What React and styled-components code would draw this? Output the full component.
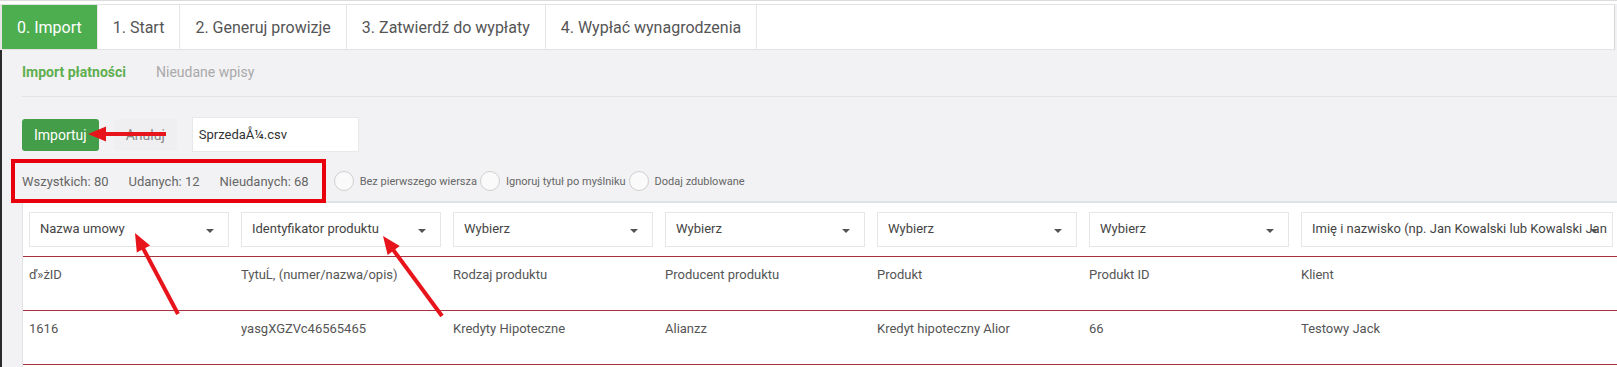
import React from "react";
import styled, { createGlobalStyle } from "styled-components";

const GlobalStyle = createGlobalStyle`
  html, body { margin: 0; padding: 0; background: #f2f2f4; }
  body { font-family: Roboto, "Noto Sans", "Liberation Sans", Arial, sans-serif; overflow: hidden; }
  * { box-sizing: border-box; }
`;

const Page = styled.div`
  position: relative;
  width: 1617px;
  height: 367px;
  overflow: hidden;
  background: #f2f2f4;
  border-top: 1px solid #dcdcdc;
  display: flex;
  flex-direction: column;
`;

const TopStrip = styled.div`
  height: 3px;
  background: #fff;
  flex: none;
`;

const TabBar = styled.nav`
  display: flex;
  flex: none;
  height: 46px;
  background: #fff;
  border-top: 1px solid #e3e3e3;
  border-bottom: 1px solid #e3e3e3;
  border-left: 2px solid #e6e6e6;
  border-right: 1px solid #d6d6d6;
  margin-right: 2px;
`;

const Tab = styled.div`
  display: flex;
  align-items: center;
  padding: 0 15px;
  font-size: 16px;
  color: ${(p) => (p.$active ? "#ffffff" : "#555555")};
  background: ${(p) => (p.$active ? "#4cae4f" : "#ffffff")};
  border-right: 1px solid #e6e6e6;
  white-space: nowrap;
`;

const Content = styled.div`
  flex: 1;
  display: flex;
  flex-direction: column;
  border-left: 2px solid #2b2b2b;
  padding-left: 20px;
  min-height: 0;
`;

const SubTabs = styled.div`
  display: flex;
  align-items: center;
  gap: 30px;
  height: 47px;
  padding-bottom: 3px;
  border-bottom: 1px solid #e2e2e2;
  flex: none;
`;

const SubTab = styled.div`
  font-size: 14px;
  font-weight: ${(p) => (p.$active ? 700 : 400)};
  color: ${(p) => (p.$active ? "#5fae4f" : "#a9a9a9")};
`;

const Toolbar = styled.div`
  display: flex;
  align-items: center;
  gap: 15px;
  height: 35px;
  margin-top: 20px;
  flex: none;
`;

const PrimaryButton = styled.button`
  height: 32px;
  padding: 0 12px;
  border: none;
  border-radius: 3px;
  background: #449d48;
  color: #fff;
  font-family: inherit;
  font-size: 14px;
`;

const GhostButton = styled.button`
  height: 32px;
  padding: 0 12px;
  border: none;
  border-radius: 3px;
  background: #efeff1;
  color: #888;
  font-family: inherit;
  font-size: 14px;
`;

const FileBox = styled.div`
  width: 167px;
  height: 35px;
  display: flex;
  align-items: center;
  padding-left: 6px;
  background: #fff;
  border: 1px solid #e8e8e8;
  font-size: 13px;
  color: #333;
`;

const StatsRow = styled.div`
  display: flex;
  align-items: center;
  height: 40px;
  margin-top: 9px;
  flex: none;
`;

const Stats = styled.div`
  display: flex;
  gap: 20px;
  margin-right: 25px;
`;

const Stat = styled.span`
  font-size: 13px;
  color: #666;
`;

const Option = styled.label`
  display: flex;
  align-items: center;
`;

const Circle = styled.span`
  width: 20px;
  height: 20px;
  border-radius: 50%;
  border: 1px solid #cfcfcf;
  background: #fafafa;
  flex: none;
`;

const OptionLabel = styled.span`
  font-size: 11px;
  color: #666;
  margin: 0 3px 0 6px;
  white-space: nowrap;
`;

const Panel = styled.div`
  flex: 1;
  background: #fff;
  border-top: 2px solid #dde2e8;
  border-left: 1px solid #e2e2e2;
`;

const GridRow = styled.div`
  display: grid;
  grid-template-columns: repeat(6, 212px) 1fr;
`;

const SelectRow = styled(GridRow)`
  padding: 9px 0;
`;

const DataRow = styled(GridRow)`
  height: 54px;
  border-top: 1px solid #a83240;
  &:last-child { border-bottom: 1px solid #a83240; height: 55px; }
`;

const Cell = styled.div`
  padding: 0 ${(p) => (p.$last ? "4px" : "6px")} 0 6px;
  min-width: 0;
`;

const TextCell = styled(Cell)`
  padding-top: 10px;
  font-size: 13px;
  line-height: 16px;
  color: #555;
  white-space: nowrap;
`;

const Select = styled.div`
  position: relative;
  height: 35px;
  display: flex;
  align-items: center;
  padding: 0 0 3px 10px;
  border: 1px solid #e6e6e6;
  background: #fff;
  font-size: 13px;
  color: #444;
  white-space: nowrap;
  overflow: hidden;
`;

const Caret = styled.span`
  position: absolute;
  right: 14px;
  top: 16px;
  width: 0;
  height: 0;
  border-left: 4px solid transparent;
  border-right: 4px solid transparent;
  border-top: 4px solid #555;
`;

const Highlight = styled.div`
  position: absolute;
  left: 11px;
  top: 158px;
  width: 315px;
  height: 44px;
  border: 4px solid #e8000d;
  pointer-events: none;
`;

const Overlay = styled.svg`
  position: absolute;
  left: 0;
  top: 0;
  pointer-events: none;
`;

function Arrow({ from, to }) {
  const [x1, y1] = from;
  const [x2, y2] = to;
  const dx = x2 - x1;
  const dy = y2 - y1;
  const len = Math.hypot(dx, dy);
  const ux = dx / len;
  const uy = dy / len;
  const head = 18;
  const half = 7.5;
  const bx = x2 - ux * head;
  const by = y2 - uy * head;
  const px = -uy;
  const py = ux;
  const pts = `${x2},${y2} ${bx + px * half},${by + py * half} ${bx - px * half},${by - py * half}`;
  return (
    <g>
      <line x1={x1} y1={y1} x2={bx + ux * 2} y2={by + uy * 2} stroke="#e8141b" strokeWidth="4" />
      <polygon points={pts} fill="#e8141b" />
    </g>
  );
}

const tabs = ["0. Import", "1. Start", "2. Generuj prowizje", "3. Zatwierdź do wypłaty", "4. Wypłać wynagrodzenia"];
const selects = [
  "Nazwa umowy",
  "Identyfikator produktu",
  "Wybierz",
  "Wybierz",
  "Wybierz",
  "Wybierz",
  "Imię i nazwisko (np. Jan Kowalski lub Kowalski Jan",
];
const headers = ["ď»żID", "TytuĹ‚ (numer/nazwa/opis)", "Rodzaj produktu", "Producent produktu", "Produkt", "Produkt ID", "Klient"];
const data = ["1616", "yasgXGZVc46565465", "Kredyty Hipoteczne", "Alianzz", "Kredyt hipoteczny Alior", "66", "Testowy Jack"];
const options = ["Bez pierwszego wiersza", "Ignoruj tytuł po myślniku", "Dodaj zdublowane"];

export default function App() {
  return (
    <>
      <GlobalStyle />
      <Page>
        <TopStrip />
        <TabBar>
          {tabs.map((t, i) => (
            <Tab key={t} $active={i === 0}>{t}</Tab>
          ))}
        </TabBar>
        <Content>
          <SubTabs>
            <SubTab $active>Import płatności</SubTab>
            <SubTab>Nieudane wpisy</SubTab>
          </SubTabs>
          <Toolbar>
            <PrimaryButton>Importuj</PrimaryButton>
            <GhostButton>Anuluj</GhostButton>
            <FileBox>SprzedaÅ¼.csv</FileBox>
          </Toolbar>
          <StatsRow>
            <Stats>
              <Stat>Wszystkich: 80</Stat>
              <Stat>Udanych: 12</Stat>
              <Stat>Nieudanych: 68</Stat>
            </Stats>
            {options.map((o) => (
              <Option key={o}>
                <Circle />
                <OptionLabel>{o}</OptionLabel>
              </Option>
            ))}
          </StatsRow>
          <Panel>
            <SelectRow>
              {selects.map((s, i) => (
                <Cell key={i} $last={i === selects.length - 1}>
                  <Select>
                    {s}
                    <Caret />
                  </Select>
                </Cell>
              ))}
            </SelectRow>
            <DataRow>
              {headers.map((h, i) => (
                <TextCell key={i}>{h}</TextCell>
              ))}
            </DataRow>
            <DataRow>
              {data.map((d, i) => (
                <TextCell key={i}>{d}</TextCell>
              ))}
            </DataRow>
          </Panel>
        </Content>
        <Highlight />
        <Overlay width="1617" height="367" viewBox="0 0 1617 367">
          <Arrow from={[166, 133]} to={[88, 133]} />
          <Arrow from={[178, 313]} to={[135, 232]} />
          <Arrow from={[442, 315]} to={[383, 235]} />
        </Overlay>
      </Page>
    </>
  );
}
